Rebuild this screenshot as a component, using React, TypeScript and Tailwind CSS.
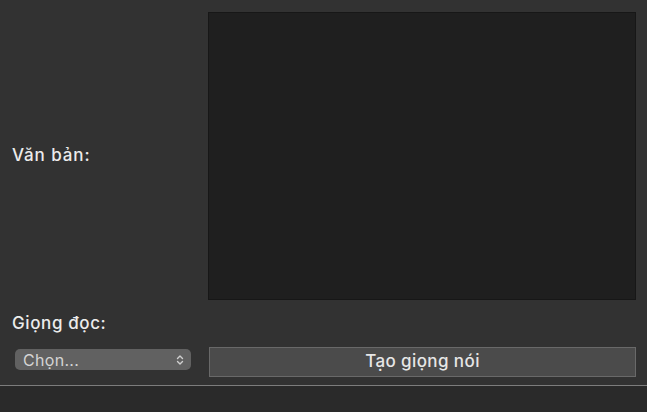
export default function App() {
  return (
    <div
      className="w-[647px] h-[412px] bg-[#323232] flex flex-col text-[#ececec]"
      style={{ fontFamily: 'Inter, "Noto Sans", sans-serif' }}
    >
      <div className="flex flex-col pt-3">
        <div className="flex">
          <div className="w-[208px] pl-3 flex items-center text-[17px] font-medium tracking-[0.9px]">Văn bản:</div>
          <div className="w-[428px] h-[288px] bg-[#1f1f1f] border border-[#171717]" />
        </div>

        <div className="h-[47px] pl-3 flex items-center text-[17px] font-medium tracking-[0.6px]">Giọng đọc:</div>

        <div className="flex h-[30px]">
          <div className="w-[209px] pl-[15px] pt-[2px]">
            <div className="w-[176px] h-[21px] rounded-[5px] bg-[#616161] flex items-center justify-between pl-2 pr-[7px] text-[16px] tracking-[0.3px] text-[#d4d4d4]">
              <span>Chọn...</span>
              <svg width="8" height="12" viewBox="0 0 8 12" fill="none" stroke="#d0d0d0" strokeWidth="1.4" strokeLinecap="round" strokeLinejoin="round">
                <path d="M1.5 4.5 L4 2 L6.5 4.5" />
                <path d="M1.5 7.5 L4 10 L6.5 7.5" />
              </svg>
            </div>
          </div>
          <button className="w-[427px] h-[30px] bg-[#4b4b4b] border border-[#696969] text-[17px] font-medium tracking-[0.4px] text-[#e6e6e6] flex items-center justify-center">
            Tạo giọng nói
          </button>
        </div>
      </div>

      <div className="mt-[8px] h-px bg-[#7d7d7d]" />
      <div className="flex-1 bg-[#2a2a2a]" />
    </div>
  );
}
